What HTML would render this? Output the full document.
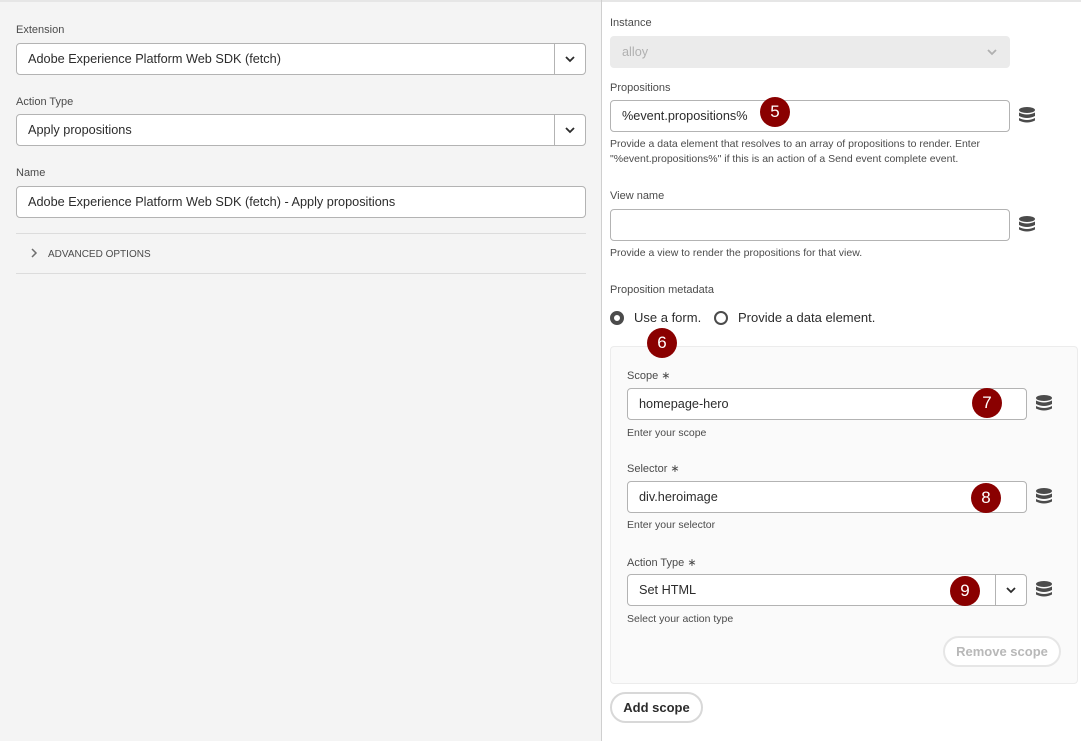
<!DOCTYPE html>
<html><head><meta charset="utf-8"><style>
*{box-sizing:border-box;margin:0;padding:0}
body{width:1081px;height:741px;overflow:hidden;font-family:"Liberation Sans",sans-serif;color:#2c2c2c;background:#fff;position:relative}
.abs{position:absolute}
#left{left:0;top:0;width:601px;height:741px;background:#f4f4f4;border-top:2px solid #e6e6e6}
#div{left:601px;top:0;width:1px;height:741px;background:#cfcfcf}
#rtop{left:602px;top:0;width:479px;height:2px;background:#e6e6e6}
.lbl{font-size:11px;color:#4b4b4b}
.help{font-size:10.5px;color:#4b4b4b;line-height:15px}
.box{background:#fff;border:1px solid #b3b3b3;border-radius:4px;font-size:12.7px;color:#2c2c2c;padding-left:11px;display:flex;align-items:center}
.dd{position:absolute;right:0;top:0;bottom:0;width:31px;border-left:1px solid #b3b3b3;display:flex;align-items:center;justify-content:center}
.badge{width:30px;height:30px;border-radius:50%;background:#8a0000;color:#fff;font-size:17px;display:flex;align-items:center;justify-content:center}
.line{height:1px;background:#dcdcdc}
.btn{border:2px solid #d8d8d8;border-radius:16px;font-size:13px;font-weight:bold;display:flex;align-items:center;justify-content:center;background:#fff}
</style></head><body>
<div id="left" class="abs"></div>
<div id="div" class="abs"></div>
<div id="rtop" class="abs"></div>
<svg width="0" height="0" style="position:absolute"><defs><g id="db"><ellipse cx="8" cy="3" rx="8" ry="3" fill="#4b4b4b"/><path d="M0 5.5 Q8 9.5 16 5.5 V9 Q8 13 0 9Z" fill="#4b4b4b"/><path d="M0 11 Q8 15 16 11 V13.5 Q8 17.5 0 13.5Z" fill="#4b4b4b"/></g><g id="chev"><path d="M1 1 L5 5 L9 1" fill="none" stroke="#2c2c2c" stroke-width="1.8"/></g></defs></svg>

<div class="abs lbl" style="left:16px;top:24px">Extension</div>
<div class="abs box" style="left:16px;top:43px;width:570px;height:32px">Adobe Experience Platform Web SDK (fetch)<div class="dd"><svg width="10" height="7"><use href="#chev"/></svg></div></div>
<div class="abs lbl" style="left:16px;top:96px">Action Type</div>
<div class="abs box" style="left:16px;top:114px;width:570px;height:32px">Apply propositions<div class="dd"><svg width="10" height="7"><use href="#chev"/></svg></div></div>
<div class="abs lbl" style="left:16px;top:167px">Name</div>
<div class="abs box" style="left:16px;top:186px;width:570px;height:32px">Adobe Experience Platform Web SDK (fetch) - Apply propositions</div>
<div class="abs line" style="left:16px;top:233px;width:570px"></div>
<div class="abs" style="left:30px;top:248px;font-size:10px;color:#4b4b4b"><svg width="8" height="10" style="margin-right:10px;vertical-align:-1px"><path d="M2 1 L6 5 L2 9" fill="none" stroke="#6e6e6e" stroke-width="1.5"/></svg>ADVANCED OPTIONS</div>
<div class="abs line" style="left:16px;top:273px;width:570px"></div>

<div class="abs lbl" style="left:610px;top:17px">Instance</div>
<div class="abs box" style="left:610px;top:36px;width:400px;height:32px;background:#ebebeb;border-color:#ebebeb;color:#b0b0b0">alloy<svg width="10" height="7" style="position:absolute;right:12px;top:12px"><path d="M1 1 L5 5 L9 1" fill="none" stroke="#b0b0b0" stroke-width="1.8"/></svg></div>
<div class="abs lbl" style="left:610px;top:82px">Propositions</div>
<div class="abs box" style="left:610px;top:100px;width:400px;height:32px">%event.propositions%</div>
<svg class="abs" style="left:1019px;top:107px" width="16" height="17"><use href="#db"/></svg>
<div class="abs help" style="left:610px;top:137px">Provide a data element that resolves to an array of propositions to render. Enter<br>"%event.propositions%" if this is an action of a Send event complete event.</div>
<div class="abs lbl" style="left:610px;top:190px">View name</div>
<div class="abs box" style="left:610px;top:209px;width:400px;height:32px"></div>
<svg class="abs" style="left:1019px;top:216px" width="16" height="17"><use href="#db"/></svg>
<div class="abs help" style="left:610px;top:246px">Provide a view to render the propositions for that view.</div>
<div class="abs lbl" style="left:610px;top:284px">Proposition metadata</div>
<div class="abs" style="left:610px;top:311px;width:14px;height:14px;border-radius:50%;border:4px solid #4b4b4b;background:#fff"></div>
<div class="abs" style="left:634px;top:310px;font-size:13px">Use a form.</div>
<div class="abs" style="left:714px;top:311px;width:14px;height:14px;border-radius:50%;border:2px solid #4b4b4b"></div>
<div class="abs" style="left:738px;top:310px;font-size:13px">Provide a data element.</div>

<div class="abs" style="left:610px;top:346px;width:468px;height:338px;background:#fafafa;border:1px solid #ececec;border-radius:4px"></div>
<div class="abs lbl" style="left:627px;top:369px">Scope ∗</div>
<div class="abs box" style="left:627px;top:388px;width:400px;height:32px">homepage-hero</div>
<svg class="abs" style="left:1036px;top:395px" width="16" height="17"><use href="#db"/></svg>
<div class="abs help" style="left:627px;top:426px">Enter your scope</div>
<div class="abs lbl" style="left:627px;top:462px">Selector ∗</div>
<div class="abs box" style="left:627px;top:481px;width:400px;height:32px">div.heroimage</div>
<svg class="abs" style="left:1036px;top:488px" width="16" height="17"><use href="#db"/></svg>
<div class="abs help" style="left:627px;top:518px">Enter your selector</div>
<div class="abs lbl" style="left:627px;top:556px">Action Type ∗</div>
<div class="abs box" style="left:627px;top:574px;width:400px;height:32px">Set HTML<div class="dd"><svg width="10" height="7"><use href="#chev"/></svg></div></div>
<svg class="abs" style="left:1036px;top:581px" width="16" height="17"><use href="#db"/></svg>
<div class="abs help" style="left:627px;top:612px">Select your action type</div>
<div class="abs btn" style="left:943px;top:636px;width:118px;height:31px;color:#b8b8b8;border-color:#e6e6e6">Remove scope</div>
<div class="abs btn" style="left:610px;top:692px;width:93px;height:31px">Add scope</div>

<div class="abs badge" style="left:760px;top:97px">5</div>
<div class="abs badge" style="left:647px;top:328px">6</div>
<div class="abs badge" style="left:972px;top:388px">7</div>
<div class="abs badge" style="left:971px;top:483px">8</div>
<div class="abs badge" style="left:950px;top:576px">9</div>
</body></html>
